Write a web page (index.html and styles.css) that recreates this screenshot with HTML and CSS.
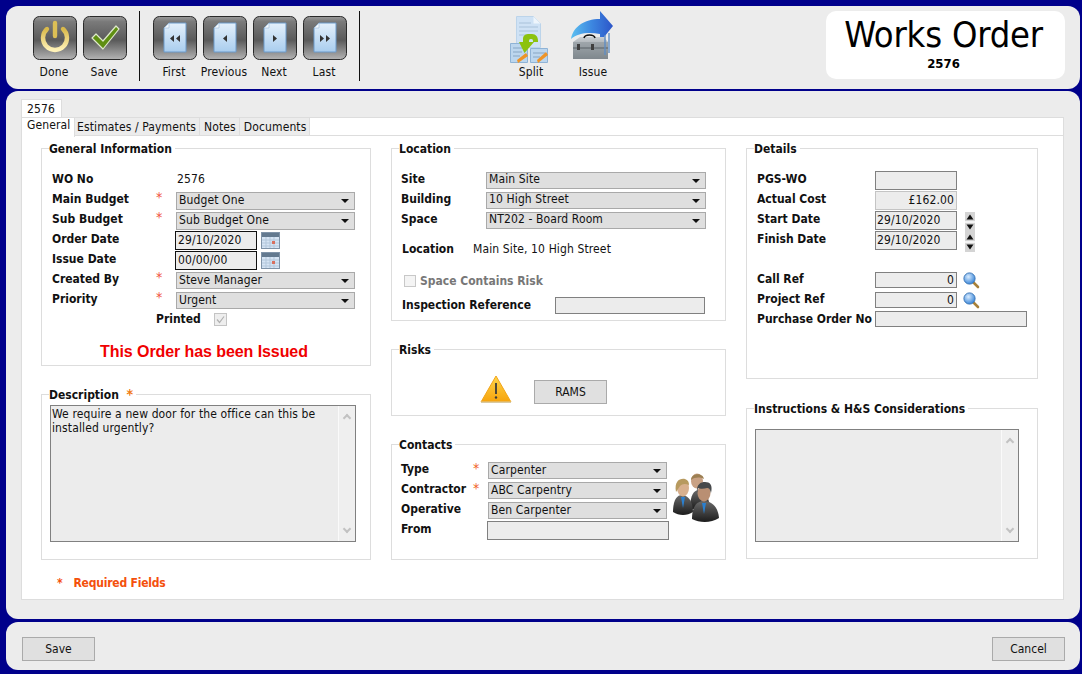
FILE: index.html
```html
<!DOCTYPE html>
<html lang="en">
<head>
<meta charset="utf-8">
<title>Works Order</title>
<link rel="stylesheet" href="styles.css">
</head>
<body>
<svg class="defs" width="0" height="0" aria-hidden="true">
  <defs>
    <linearGradient id="doc" x1="0" y1="0" x2="0" y2="1"><stop offset="0" stop-color="#e4f0fb"/><stop offset="1" stop-color="#a9cdee"/></linearGradient>
    <linearGradient id="btn" x1="0" y1="0" x2="0" y2="1"><stop offset="0" stop-color="#9a9a9a"/><stop offset=".12" stop-color="#7a7a7a"/><stop offset=".55" stop-color="#5a5a5a"/><stop offset="1" stop-color="#b4b4b4"/></linearGradient>
    <linearGradient id="gold" x1="0" y1="0" x2="0" y2="1"><stop offset="0" stop-color="#d9b94a"/><stop offset="1" stop-color="#fff2b8"/></linearGradient>
    <linearGradient id="arrow" x1="0" y1="0" x2="1" y2="0"><stop offset="0" stop-color="#5cc0f0"/><stop offset=".5" stop-color="#3c86e0"/><stop offset="1" stop-color="#2c55c8"/></linearGradient>
    <linearGradient id="box" x1="0" y1="0" x2="0" y2="1"><stop offset="0" stop-color="#c9ced2"/><stop offset="1" stop-color="#6f777d"/></linearGradient>
    <linearGradient id="warn" x1="0" y1="0" x2="0" y2="1"><stop offset="0" stop-color="#ffd54a"/><stop offset="1" stop-color="#f6a30c"/></linearGradient>
    <linearGradient id="suit" x1="0" y1="0" x2="0" y2="1"><stop offset="0" stop-color="#6a6a6a"/><stop offset="1" stop-color="#1c1c1c"/></linearGradient>
    <radialGradient id="lens" cx=".4" cy=".35" r=".7"><stop offset="0" stop-color="#d9ecff"/><stop offset="1" stop-color="#2f7fd6"/></radialGradient>
    <symbol id="cal" viewBox="0 0 19 17">
      <rect x=".5" y=".5" width="18" height="16" fill="#d5e4f4" stroke="#7f93a8"/>
      <rect x="1" y="1" width="17" height="4" fill="#62798f"/>
      <path d="M1 8h17M1 11h17M1 14h17M5 5v11M9 5v11M13 5v11" stroke="#b3c7db"/>
      <rect x="11" y="9" width="3" height="3" fill="#d8705f"/>
    </symbol>
    <symbol id="mag" viewBox="0 0 17 17">
      <path d="M10 10l5 5" stroke="#a8813a" stroke-width="2.6" stroke-linecap="round"/>
      <circle cx="6.500" cy="6.500" r="5.600" fill="url(#lens)" stroke="#3d78b8"/>
    </symbol>
    <symbol id="spin" viewBox="0 0 10 20">
      <rect width="10" height="20" fill="#d4d4d4"/>
      <path d="M5 2.500l3.500 5h-7z" fill="#111"/>
      <rect y="9" width="10" height="2" fill="#f4f4f4"/>
      <path d="M5 17.500l3.500-5h-7z" fill="#111"/>
    </symbol>
    <symbol id="page" viewBox="0 0 44 44">
      <rect x=".5" y=".5" width="43" height="43" rx="6" fill="url(#btn)" stroke="#2a2a2a"/>
      <path d="M16 7h17v29H11V12z" fill="url(#doc)" stroke="#6d9bcb"/>
      <path d="M16 7v5h-5z" fill="#f4f8fc" stroke="#9bbad8" stroke-width=".6"/>
    </symbol>
  </defs>
</svg>

<div class="page">
  <header class="panel toolbar">
    <div class="tool-group tool-first">
      <div class="tool">
        <svg class="tool-icon" viewBox="0 0 44 44"><rect x=".5" y=".5" width="43" height="43" rx="6" fill="url(#btn)" stroke="#2a2a2a"/><path d="M14 13a12 12 0 1 0 16 0" fill="none" stroke="url(#gold)" stroke-width="4.400" stroke-linecap="round"/><path d="M22 7v13" stroke="#dcbf55" stroke-width="4.400" stroke-linecap="round"/></svg>
        <span>Done</span>
      </div>
      <div class="tool">
        <svg class="tool-icon" viewBox="0 0 44 44"><rect x=".5" y=".5" width="43" height="43" rx="6" fill="url(#btn)" stroke="#2a2a2a"/><path d="M9 22l4-4 7 7 13-15 3 3-16 20z" fill="#5f8f12" stroke="#dfe9cc" stroke-width="1.200" stroke-linejoin="round"/></svg>
        <span>Save</span>
      </div>
    </div>
    <div class="tool-group tool-nav">
      <div class="tool">
        <svg class="tool-icon" viewBox="0 0 44 44"><use href="#page"/><path d="M21 19v7l-4-3.500zM27 19v7l-4-3.500z" fill="#333"/></svg>
        <span>First</span>
      </div>
      <div class="tool">
        <svg class="tool-icon" viewBox="0 0 44 44"><use href="#page"/><path d="M24 19v7l-4-3.500z" fill="#333"/></svg>
        <span>Previous</span>
      </div>
      <div class="tool">
        <svg class="tool-icon" viewBox="0 0 44 44"><use href="#page"/><path d="M20 19v7l4-3.500z" fill="#333"/></svg>
        <span>Next</span>
      </div>
      <div class="tool">
        <svg class="tool-icon" viewBox="0 0 44 44"><use href="#page"/><path d="M17 19v7l4-3.500zM23 19v7l4-3.500z" fill="#333"/></svg>
        <span>Last</span>
      </div>
    </div>
    <div class="tool-actions">
      <div class="action">
        <svg class="action-icon split-icon" viewBox="0 0 38 47">
          <path d="M6.500.5h17l7 7v24h-24z" fill="#cfe2f5" stroke="#bcd4ea"/>
          <path d="M23.500.5v7h7z" fill="#eef5fc"/>
          <path d="M9 7h12M9 11h19M9 15h19M9 19h8" stroke="#a9c2da"/>
          <path d="M.5 27.500h17v19H.5zM20.500 32.500h17v14h-17z" fill="#bcd6ee" stroke="#8fb3d6"/>
          <path d="M3 32h12M3 36h9M3 40h7M23 37h12M23 41h7" stroke="#87a6c4"/>
          <path d="M13 26V23c0-4 3-5 6-5h3c4 0 6 3 6 7v1h-5c0-2 0-3-2-3-2 0-2 1-2 3h5l-9.500 11L9 26z" fill="#8cc20e"/>
          <path d="M8 47l-1-3 9-7 2 3zM28 47l-1-3 9-8 2 3z" fill="#ee9428"/>
        </svg>
        <span>Split</span>
      </div>
      <div class="action">
        <svg class="action-icon issue-icon" viewBox="0 0 43 50">
          <path d="M1 28C3 16 14 8 30 8V0l13 15-13 16v-8C18 21 8 22 1 28z" fill="url(#arrow)"/>
          <path d="M3 31l7-5h24l4 5v17H3z" fill="url(#box)"/>
          <path d="M3 31h35v17H3z" fill="#8d959b" fill-opacity=".55"/>
          <path d="M14 27c1-4 10-4 11 0" fill="none" stroke="#111" stroke-width="1.600"/>
          <path d="M3 37h35" stroke="#596066"/>
          <rect x="7" y="33" width="3" height="6" fill="#3f3f3f"/><rect x="21" y="33" width="3" height="6" fill="#3f3f3f"/>
          <path d="M35 24v20M39 22v20" stroke="#5f8dc4" stroke-width="1.400"/>
        </svg>
        <span>Issue</span>
      </div>
    </div>
    <div class="title-card">
      <h1>Works Order</h1>
      <strong>2576</strong>
    </div>
  </header>

  <main class="panel content">
    <div class="record-tab">2576</div>
    <nav class="tabs">
      <span class="tab active">General</span>
      <span class="tab">Estimates / Payments</span>
      <span class="tab">Notes</span>
      <span class="tab">Documents</span>
    </nav>
    <section class="sheet">
      <div class="columns">
        <div class="col col-a">
          <fieldset class="group g-info">
            <legend>General Information</legend>
            <div class="rows">
              <div class="row"><label class="lbl w-a">WO No</label><span class="val">2576</span></div>
              <div class="row"><label class="lbl w-a">Main Budget</label><i class="req">*</i><div class="select s-a tall">Budget One</div></div>
              <div class="row"><label class="lbl w-a">Sub Budget</label><i class="req">*</i><div class="select s-a tall">Sub Budget One</div></div>
              <div class="row"><label class="lbl w-a">Order Date</label><div class="date">29/10/2020</div><svg class="cal"><use href="#cal"/></svg></div>
              <div class="row"><label class="lbl w-a">Issue Date</label><div class="date">00/00/00</div><svg class="cal"><use href="#cal"/></svg></div>
              <div class="row"><label class="lbl w-a">Created By</label><i class="req">*</i><div class="select s-a">Steve Manager</div></div>
              <div class="row"><label class="lbl w-a">Priority</label><i class="req">*</i><div class="select s-a">Urgent</div></div>
              <div class="row printed"><label class="lbl">Printed</label><svg class="check" viewBox="0 0 13 13"><rect x=".5" y=".5" width="12" height="12" fill="#eee" stroke="#c4c4c4"/><path d="M3 6.500l2.500 3L10 3.500" fill="none" stroke="#b0b0b0" stroke-width="1.200"/></svg></div>
            </div>
            <p class="issued">This Order has been Issued</p>
          </fieldset>
          <fieldset class="group g-desc">
            <legend>Description <i class="req-o">*</i></legend>
            <div class="textarea">
              <p>We require a new door for the office can this be installed urgently?</p>
              <div class="scroll"><span class="chev up"></span><span class="chev down"></span></div>
            </div>
          </fieldset>
          <div class="required"><i>*</i><span>Required Fields</span></div>
        </div>

        <div class="col col-b">
          <fieldset class="group g-loc">
            <legend>Location</legend>
            <div class="rows">
              <div class="row"><label class="lbl w-b">Site</label><div class="select s-b">Main Site</div></div>
              <div class="row"><label class="lbl w-b">Building</label><div class="select s-b">10 High Street</div></div>
              <div class="row"><label class="lbl w-b">Space</label><div class="select s-b">NT202 - Board Room</div></div>
              <div class="row loc-line"><label class="lbl w-loc">Location</label><span class="val">Main Site, 10 High Street</span></div>
              <div class="row risk-line"><span class="box"></span><label class="lbl muted">Space Contains Risk</label></div>
              <div class="row insp-line"><label class="lbl w-insp">Inspection Reference</label><div class="input i-insp"></div></div>
            </div>
          </fieldset>
          <fieldset class="group g-risk">
            <legend>Risks</legend>
            <div class="risk-body">
              <svg class="warn" viewBox="0 0 32 28"><path d="M16 1L31 27H1z" fill="url(#warn)" stroke="#f2a418" stroke-linejoin="round"/><rect y="26.500" x="1" width="30" height="1.500" fill="#d9c9a0"/><path d="M16 8v11" stroke="#3a3a3a" stroke-width="1.800"/><circle cx="16" cy="22.500" r="1.200" fill="#3a3a3a"/></svg>
              <button class="btn rams">RAMS</button>
            </div>
          </fieldset>
          <fieldset class="group g-con">
            <legend>Contacts</legend>
            <div class="con-body">
              <div class="rows con-rows">
                <div class="row"><label class="lbl w-c">Type</label><i class="req-c">*</i><div class="select s-c">Carpenter</div></div>
                <div class="row"><label class="lbl w-c">Contractor</label><i class="req-c near">*</i><div class="select s-c">ABC Carpentry</div></div>
                <div class="row"><label class="lbl w-c">Operative</label><i class="req-c"></i><div class="select s-c">Ben Carpenter</div></div>
                <div class="row"><label class="lbl w-c">From</label><i class="req-c"></i><div class="input i-from"></div></div>
              </div>
              <svg class="people" viewBox="0 0 47 49">
                <path d="M18 36c0-14 4-19 9-19s10 5 11 19z" fill="url(#suit)"/>
                <ellipse cx="25" cy="8" rx="6" ry="7.500" fill="#c9a184"/><path d="M19 7c0-7 12-8 13-1-4-2-9-2-13 1z" fill="#9c7f52"/>
                <path d="M1 39c0-12 4-17 9-17s11 5 11 17c-6 4-14 4-20 0z" fill="url(#suit)"/>
                <path d="M9 24l2 11 2-11z" fill="#2a80d0"/>
                <ellipse cx="11" cy="15" rx="6" ry="8.500" fill="#d8b08e"/><path d="M4 19C2 8 8 5 13 6c3 1 4 3 4 6-4-2-7-1-9 1z" fill="#b79a5f"/>
                <path d="M20 46c0-13 5-18 12-18s14 5 15 17c-8 5-19 5-27 1z" fill="url(#suit)"/>
                <path d="M30 30l2 11 2-11z" fill="#2a80d0"/>
                <ellipse cx="32" cy="20" rx="6.500" ry="8.500" fill="#b98f73"/><path d="M25 20c-1-9 4-11 8-11 5 0 8 3 6 11-1-4-2-5-4-5-3 1-7 1-9 0z" fill="#47494b"/>
              </svg>
            </div>
          </fieldset>
        </div>

        <div class="col col-c">
          <fieldset class="group g-det">
            <legend>Details</legend>
            <div class="rows">
              <div class="row"><label class="lbl w-d">PGS-WO</label><div class="input i-d"></div></div>
              <div class="row"><label class="lbl w-d">Actual Cost</label><div class="input i-d num pale">£162.00</div></div>
              <div class="row"><label class="lbl w-d">Start Date</label><div class="input i-d date-d">29/10/2020</div><svg class="spin"><use href="#spin"/></svg></div>
              <div class="row"><label class="lbl w-d">Finish Date</label><div class="input i-d date-d">29/10/2020</div><svg class="spin"><use href="#spin"/></svg></div>
              <div class="row gap-row"><label class="lbl w-d">Call Ref</label><div class="input i-d num ref">0</div><svg class="mag"><use href="#mag"/></svg></div>
              <div class="row"><label class="lbl w-d">Project Ref</label><div class="input i-d num ref">0</div><svg class="mag"><use href="#mag"/></svg></div>
              <div class="row"><label class="lbl w-d">Purchase Order No</label><div class="input i-po"></div></div>
            </div>
          </fieldset>
          <fieldset class="group g-ins">
            <legend>Instructions &amp; H&amp;S Considerations</legend>
            <div class="textarea ta-ins">
              <p></p>
              <div class="scroll"><span class="chev up"></span><span class="chev down"></span></div>
            </div>
          </fieldset>
        </div>
      </div>
    </section>
  </main>

  <footer class="panel footer">
    <button class="btn foot">Save</button>
    <button class="btn foot">Cancel</button>
  </footer>
</div>
</body>
</html>
```
FILE: styles.css
```css
* { box-sizing: border-box; }
html, body { margin: 0; height: 100%; }
body {
  background: #00008b;
  color: #111;
  font-family: "DejaVu Sans Condensed", "DejaVu Sans", sans-serif;
  font-stretch: condensed;
  font-size: 12px;
  line-height: 14px;
  letter-spacing: .12px;
  overflow: hidden;
}
.defs { position: absolute; }
.page { display: flex; flex-direction: column; height: 674px; padding: 6px 2px 4px 6px; }
.panel { background: #ececec; border-radius: 12px; }

.toolbar { height: 83px; flex: none; display: flex; position: relative; padding: 5px 15px 0 0; }
.tool-group { display: flex; height: 70px; border-right: 1px solid #111; gap: 6px; padding-top: 5px; }
.tool-first { padding-left: 27px; width: 134px; }
.tool-nav { padding-left: 13px; width: 220px; }
.tool { width: 44px; display: flex; flex-direction: column; align-items: center; gap: 5px; }
.tool-icon { width: 44px; height: 44px; display: block; flex: none; }
.tool span { white-space: nowrap; margin-right: 2px; }
.tool-actions { display: flex; margin-left: 151px; gap: 22px; }
.action { display: flex; flex-direction: column; align-items: center; width: 40px; position: relative; }
.action-icon { display: block; flex: none; }
.split-icon { width: 38px; height: 47px; margin: 5px 4px 0 0; }
.issue-icon { width: 43px; height: 50px; margin-right: 3px; }
.action span { position: absolute; top: 54px; }
.title-card { margin-left: auto; width: 239px; height: 68px; background: #fff; border-radius: 10px; text-align: center; padding: 3px 4px 0 0; }
.title-card h1 { margin: 0; font-size: 36px; line-height: 42px; font-weight: 400; color: #000; letter-spacing: -.2px; }
.title-card strong { display: block; font-size: 13px; line-height: 14px; margin-top: 1px; color: #000; letter-spacing: 0; }

.content { flex: 1; min-height: 0; margin-top: 2px; padding: 6px 16px 19px 15px; display: flex; flex-direction: column; }
.record-tab { width: 41px; height: 19px; background: #fff; border: 1px solid #ddd; border-bottom: 0; padding: 2px 0 0 5px; flex: none; margin-top: 2px; }
.tabs { display: flex; height: 19px; background: #fff; border: 1px solid #ddd; flex: none; margin-top: -1px; }
.tab { background: #ececec; border-right: 1px solid #ddd; padding: 2px 3px 0 4px; white-space: nowrap; }
.tab.active { background: #fff; padding: 0 4px 0 5px; width: 54px; height: 20px; margin-top: -1px; border: 1px solid #ddd; border-bottom: 0; margin-left: -1px; position: relative; }
.tab.active + .tab { padding-left: 2px; }
.sheet { flex: 1; background: #fff; border: 1px solid #ddd; border-top: 0; padding: 5px 0 0 19px; min-height: 0; }
.columns { display: flex; gap: 20px; }
.col { display: flex; flex-direction: column; gap: 21px; position: relative; }
.col-a { width: 330px; }
.col-b { width: 335px; }
.col-c { width: 292px; gap: 22px; }

.group { border: 1px solid #ddd; margin: 0; padding: 0 0 0 9px; min-width: 0; }
.group legend { font-weight: 700; padding: 0 3px 0 0; margin-left: -2px; line-height: 14px; white-space: nowrap; background: #fff; letter-spacing: 0; position: relative; top: 1px; }
.g-desc legend { top: 0; }
.g-info { height: 225px; }
.g-desc { height: 173px; }
.g-loc { height: 180px; }
.g-risk { height: 74px; }
.g-con { height: 123px; }
.g-det { height: 238px; }
.g-ins { height: 158px; }

.rows { display: flex; flex-direction: column; padding-top: 14px; }
.row { display: flex; align-items: center; height: 20px; flex: none; }
.lbl { font-weight: 700; flex: none; white-space: nowrap; letter-spacing: 0; }
.val { white-space: nowrap; }
.w-a { width: 105px; padding-left: 1px; }
.req { width: 20px; color: #f0503c; font-style: normal; font-size: 14px; flex: none; height: 20px; line-height: 16px; }
.req-o { color: #f07a10; font-style: normal; font-size: 14px; margin-left: 4px; }
.req-c { width: 15px; color: #f0601c; font-style: normal; font-size: 14px; flex: none; text-align: right; height: 20px; line-height: 18px; padding-right: 10px; }
.req-c.near { padding-right: 9px; }
.w-a + .val { margin-left: 21px; }
.w-a + .date { margin-left: 19px; }
.select { height: 17px; align-self: flex-start; margin-top: 3px; background: #dfdfdf; border: 1px solid #a9a9a9; padding-left: 2px; line-height: 14px; position: relative; flex: none; white-space: nowrap; }
.select::after { content: ""; position: absolute; right: 5px; top: 6px; border: 4px solid transparent; border-top: 4px solid #111; border-bottom: 0; }
.s-a { width: 179px; }
.s-a.tall { height: 18px; line-height: 15px; }
.s-b { width: 220px; line-height: 12px; }
.s-c { width: 179px; }
.w-b { width: 85px; }
.date { width: 82px; height: 19px; align-self: flex-start; margin-top: 2px; border: 1px solid #111; background: #ececec; line-height: 16px; padding-left: 2px; flex: none; }
.cal { width: 19px; height: 17px; align-self: flex-start; margin: 3px 0 0 4px; flex: none; }
.printed { padding-left: 105px; }
.check { width: 13px; height: 13px; margin-left: 13px; }
.issued { margin: 13px 0 0; text-align: center; color: #f00000; font: 700 16px/20px "Liberation Sans", sans-serif; letter-spacing: -.08px; padding-right: 13px; }

.input { height: 16px; align-self: flex-start; margin-top: 2px; background: #ececec; border: 1px solid #808080; flex: none; line-height: 14px; padding: 0 2px; }
.w-loc { width: 72px; padding-left: 1px; }
.loc-line { margin-top: 10px; }
.risk-line { margin-top: 12px; padding-left: 3px; height: 20px; }
.box { width: 12px; height: 12px; background: #f4f4f4; border: 1px solid #c8c8c8; margin-right: 4px; }
.muted { color: #777; }
.insp-line { margin-top: 4px; }
.w-insp { width: 154px; padding-left: 1px; }
.i-insp { width: 150px; height: 17px; }

.risk-body { display: flex; align-items: flex-start; padding: 19px 0 0 79px; }
.warn { width: 32px; height: 28px; flex: none; }
.rams { margin: 5px 0 0 22px; padding-right: 2px; }
.btn { background: #e0e0e0; border: 1px solid #aaa; color: #111; font: inherit; font-stretch: condensed; width: 73px; height: 24px; padding: 0; }

.con-body { display: flex; }
.con-rows { padding-top: 8px; }
.w-c { width: 72px; }
.i-from { width: 182px; height: 19px; margin-left: -1px; }
.people { width: 47px; height: 49px; margin: 22px 0 0 3px; flex: none; }

.w-d { width: 119px; padding-left: 1px; }
.i-d { width: 82px; height: 19px; line-height: 16px; flex: none; }
.num { text-align: right; }
.pale { border-color: #c4c4c4; }
.date-d { padding-left: 1px; }
.ref { height: 16px; margin-top: 3px; line-height: 14px; }
.spin { width: 10px; height: 20px; align-self: flex-start; margin: 3px 0 0 8px; flex: none; }
.gap-row { margin-top: 20px; }
.mag { width: 17px; height: 17px; align-self: flex-start; margin: 3px 0 0 6px; flex: none; }
.i-po { width: 152px; height: 16px; }

.textarea { height: 137px; width: 306px; margin: 3px 0 0 -1px; background: #ececec; border: 1px solid #808080; position: relative; padding: 1px 17px 0 1px; }
.textarea p { margin: 0; }
.scroll { position: absolute; right: 0; top: 0; bottom: 0; width: 17px; background: #efefef; border-left: 1px solid #fafafa; display: flex; flex-direction: column; justify-content: space-between; align-items: center; padding: 9px 0 9px; }
.chev { width: 6px; height: 6px; border: solid #c2c2c2; border-width: 2px 0 0 2px; transform: rotate(45deg); }
.chev.down { transform: rotate(225deg); }
.ta-ins { width: 264px; height: 113px; margin: 14px 0 0 -1px; }

.required { position: absolute; left: 16px; top: 435px; color: #f4500c; font-weight: 700; display: flex; gap: 11px; white-space: nowrap; letter-spacing: -.2px; }
.required i { font-style: normal; }

.footer { height: 48px; flex: none; margin-top: 3px; display: flex; justify-content: space-between; align-items: flex-start; padding: 15px 15px 0 16px; }
.foot { width: 73px; height: 24px; }
```
